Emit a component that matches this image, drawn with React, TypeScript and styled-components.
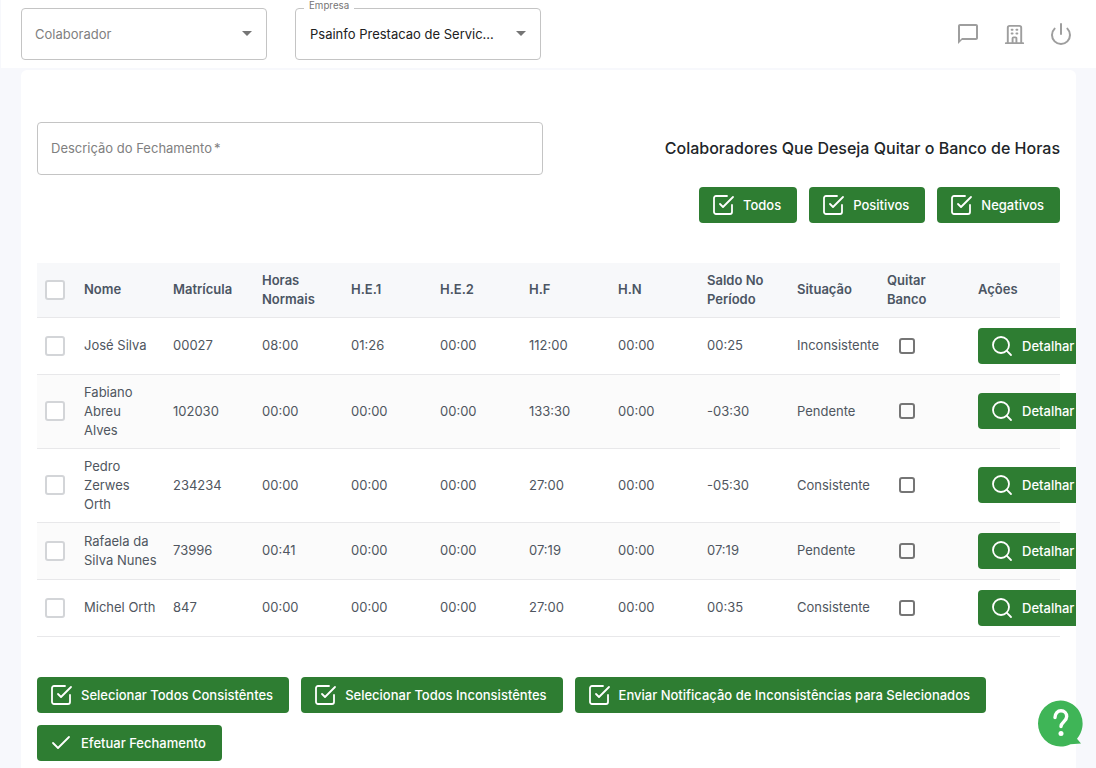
import React from "react";
import styled, { createGlobalStyle } from "styled-components";
import { FiCheck, FiCheckSquare, FiPower, FiSearch } from "react-icons/fi";
import { MdOutlineChatBubbleOutline } from "react-icons/md";
import { HiOutlineOfficeBuilding } from "react-icons/hi";

const rows = [
  { nome: "José Silva", mat: "00027", normais: "08:00", he1: "01:26", he2: "00:00", hf: "112:00", hn: "00:00", saldo: "00:25", sit: "Inconsistente" },
  { nome: "Fabiano Abreu Alves", mat: "102030", normais: "00:00", he1: "00:00", he2: "00:00", hf: "133:30", hn: "00:00", saldo: "-03:30", sit: "Pendente" },
  { nome: "Pedro Zerwes Orth", mat: "234234", normais: "00:00", he1: "00:00", he2: "00:00", hf: "27:00", hn: "00:00", saldo: "-05:30", sit: "Consistente" },
  { nome: "Rafaela da Silva Nunes", mat: "73996", normais: "00:41", he1: "00:00", he2: "00:00", hf: "07:19", hn: "00:00", saldo: "07:19", sit: "Pendente" },
  { nome: "Michel Orth", mat: "847", normais: "00:00", he1: "00:00", he2: "00:00", hf: "27:00", hn: "00:00", saldo: "00:35", sit: "Consistente" },
];

const selectButtons = [
  "Selecionar Todos Consistêntes",
  "Selecionar Todos Inconsistêntes",
  "Enviar Notificação de Inconsistências para Selecionados",
];

function App() {
  return (
    <Page>
      <GlobalStyle />
      <Header>
        <SelectBox>
          <Placeholder>Colaborador</Placeholder>
          <Arrow />
        </SelectBox>
        <SelectBox>
          <FloatLabel>Empresa</FloatLabel>
          <SelectValue>Psainfo Prestacao de Servic...</SelectValue>
          <Arrow />
        </SelectBox>
        <HeaderIcons>
          <MdOutlineChatBubbleOutline size={24} />
          <HiOutlineOfficeBuilding size={23} />
          <FiPower size={24} strokeWidth={2} />
        </HeaderIcons>
      </Header>

      <Card>
        <TopRow>
          <TextField>
            Descrição do Fechamento<Required>*</Required>
          </TextField>
          <QuitarTitle>Colaboradores Que Deseja Quitar o Banco de Horas</QuitarTitle>
        </TopRow>
        <QuitarButtons>
          <GreenButton><FiCheckSquare />Todos</GreenButton>
          <GreenButton><FiCheckSquare />Positivos</GreenButton>
          <GreenButton><FiCheckSquare />Negativos</GreenButton>
        </QuitarButtons>

        <Table>
          <colgroup>
            <col width={39} />
            <col width={89} />
            <col width={89} />
            <col width={89} />
            <col width={89} />
            <col width={89} />
            <col width={89} />
            <col width={89} />
            <col width={90} />
            <col width={90} />
            <col width={91} />
            <col width={90} />
          </colgroup>
          <thead>
            <tr>
              <HeadCell><RowCheck /></HeadCell>
              <HeadCell>Nome</HeadCell>
              <HeadCell>Matrícula</HeadCell>
              <HeadCell>Horas Normais</HeadCell>
              <HeadCell>H.E.1</HeadCell>
              <HeadCell>H.E.2</HeadCell>
              <HeadCell>H.F</HeadCell>
              <HeadCell>H.N</HeadCell>
              <HeadCell>Saldo No Período</HeadCell>
              <HeadCell>Situação</HeadCell>
              <HeadCell>Quitar Banco</HeadCell>
              <HeadCell>Ações</HeadCell>
            </tr>
          </thead>
          <tbody>
            {rows.map((r, i) => (
              <Row key={r.nome} $striped={i % 2 === 1}>
                <Cell><RowCheck /></Cell>
                <Cell>{r.nome}</Cell>
                <Cell>{r.mat}</Cell>
                <Cell>{r.normais}</Cell>
                <Cell>{r.he1}</Cell>
                <Cell>{r.he2}</Cell>
                <Cell>{r.hf}</Cell>
                <Cell>{r.hn}</Cell>
                <Cell>{r.saldo}</Cell>
                <Cell>{r.sit}</Cell>
                <Cell><QuitarCheck /></Cell>
                <Cell>
                  <DetailButton><FiSearch />Detalhar</DetailButton>
                </Cell>
              </Row>
            ))}
          </tbody>
        </Table>

        <BottomButtons>
          {selectButtons.map((label) => (
            <GreenButton key={label}><FiCheckSquare />{label}</GreenButton>
          ))}
          <GreenButton><FiCheck />Efetuar Fechamento</GreenButton>
        </BottomButtons>
      </Card>

      <HelpBubble viewBox="0 0 46 47">
        <path d="M22.500 .5A22.500 23 0 1 0 22.500 46.500c3.500 0 7-.8 10-2.300L43 43.500 39 38.700A22.500 23 0 0 0 22.500 .5z" fill="#3fb557" />
        <path d="M17 17.500c0-4 2.700-6.800 6-6.800s5.700 2.500 5.700 5.800c0 5-5.700 5.300-5.700 10" fill="none" stroke="#fff" strokeWidth="3.400" strokeLinecap="round" />
        <circle cx="23" cy="33.500" r="2.500" fill="#fff" />
      </HelpBubble>
    </Page>
  );
}

export default App;

const GlobalStyle = createGlobalStyle`
  html, body {
    margin: 0;
    padding: 0;
    height: 100%;
    overflow: hidden;
    background: #f7f8fc;
    font-family: Inter, "Liberation Sans", sans-serif;
  }
`;

const Page = styled.div`
  width: 1096px;
  height: 768px;
  overflow: hidden;
  position: relative;
  padding-left: 1px;
  box-sizing: border-box;
`;

const Header = styled.header`
  height: 68px;
  background: #fff;
  display: flex;
  align-items: flex-start;
  gap: 28px;
  padding: 8px 0 0 20px;
  box-sizing: border-box;
`;

const SelectBox = styled.div`
  position: relative;
  width: 246px;
  height: 52px;
  box-sizing: border-box;
  border: 1px solid #c4c4c4;
  border-radius: 4px;
  display: flex;
  align-items: center;
  padding: 0 13px 0 14px;
  font-size: 13px;
`;

const Placeholder = styled.span`
  color: #808080;
  margin-left: -1px;
`;

const SelectValue = styled.span`
  color: #212121;
  white-space: nowrap;
`;

const FloatLabel = styled.span`
  position: absolute;
  top: -9px;
  left: 8px;
  padding: 0 5px;
  background: #fff;
  font-size: 9.75px;
  line-height: 12px;
  color: #757575;
`;

const Arrow = styled.span`
  position: absolute;
  right: 14px;
  top: 22px;
  width: 0;
  height: 0;
  border-left: 5.5px solid transparent;
  border-right: 5.5px solid transparent;
  border-top: 5.5px solid #757575;
`;

const HeaderIcons = styled.div`
  margin-left: auto;
  display: flex;
  align-items: center;
  gap: 23px;
  padding: 14px 23px 0 0;
  color: #9e9e9e;
`;

const Card = styled.main`
  margin: 2px 20px 0 20px;
  height: 700px;
  background: #fff;
  border-radius: 6px 6px 0 0;
  padding: 52px 16px 0;
  box-sizing: border-box;
  overflow: hidden;
`;

const TopRow = styled.div`
  display: flex;
  align-items: center;
  justify-content: space-between;
`;

const TextField = styled.div`
  width: 506px;
  height: 53px;
  box-sizing: border-box;
  border: 1px solid #c4c4c4;
  border-radius: 4px;
  display: flex;
  align-items: center;
  padding: 0 13px 2px;
  font-size: 13px;
  color: #808080;
`;

const Required = styled.span`
  margin-left: 2px;
`;

const QuitarTitle = styled.h2`
  margin: 0 0 2px;
  font-size: 16px;
  font-weight: 500;
  color: #212529;
`;

const QuitarButtons = styled.div`
  display: flex;
  justify-content: flex-end;
  gap: 12px;
  margin-top: 12px;
`;

const GreenButton = styled.button`
  height: 36px;
  border: none;
  border-radius: 4px;
  background: #2e7d32;
  color: #fff;
  font-family: inherit;
  font-size: 13px;
  font-weight: 500;
  display: inline-flex;
  align-items: center;
  gap: 8px;
  padding: 0 16px 0 12px;
  white-space: nowrap;

  svg {
    width: 24px;
    height: 24px;
    stroke-width: 1.8;
  }
`;

const DetailButton = styled(GreenButton)`
  display: flex;
`;

const Table = styled.table`
  width: 1023px;
  margin-top: 40px;
  border-collapse: collapse;
  table-layout: fixed;
  font-size: 13px;
  line-height: 19px;
  color: #4f5660;
`;

const HeadCell = styled.th`
  height: 54px;
  padding: 0 8px;
  box-sizing: border-box;
  text-align: left;
  font-weight: 600;
  color: #4b5563;
  background: #f7f8fa;
  border-bottom: 1px solid #e8e8ea;
`;

const Row = styled.tr<{ $striped: boolean }>`
  background: ${(p) => (p.$striped ? "#fbfbfb" : "#fff")};
`;

const Cell = styled.td`
  height: 57px;
  padding: 8px;
  box-sizing: border-box;
  border-bottom: 1px solid #e8e8ea;
`;

const RowCheck = styled.span`
  display: block;
  width: 20px;
  height: 20px;
  box-sizing: border-box;
  border: 2px solid #d3d5d8;
  border-radius: 3px;
  background: #fff;
`;

const QuitarCheck = styled.span`
  display: block;
  width: 16px;
  height: 16px;
  margin-left: 12px;
  box-sizing: border-box;
  border: 2px solid #757575;
  border-radius: 3px;
`;

const BottomButtons = styled.div`
  display: flex;
  flex-wrap: wrap;
  gap: 12px;
  margin-top: 40px;
`;

const HelpBubble = styled.svg`
  position: absolute;
  left: 1038px;
  top: 700px;
  width: 46px;
  height: 47px;
`;
